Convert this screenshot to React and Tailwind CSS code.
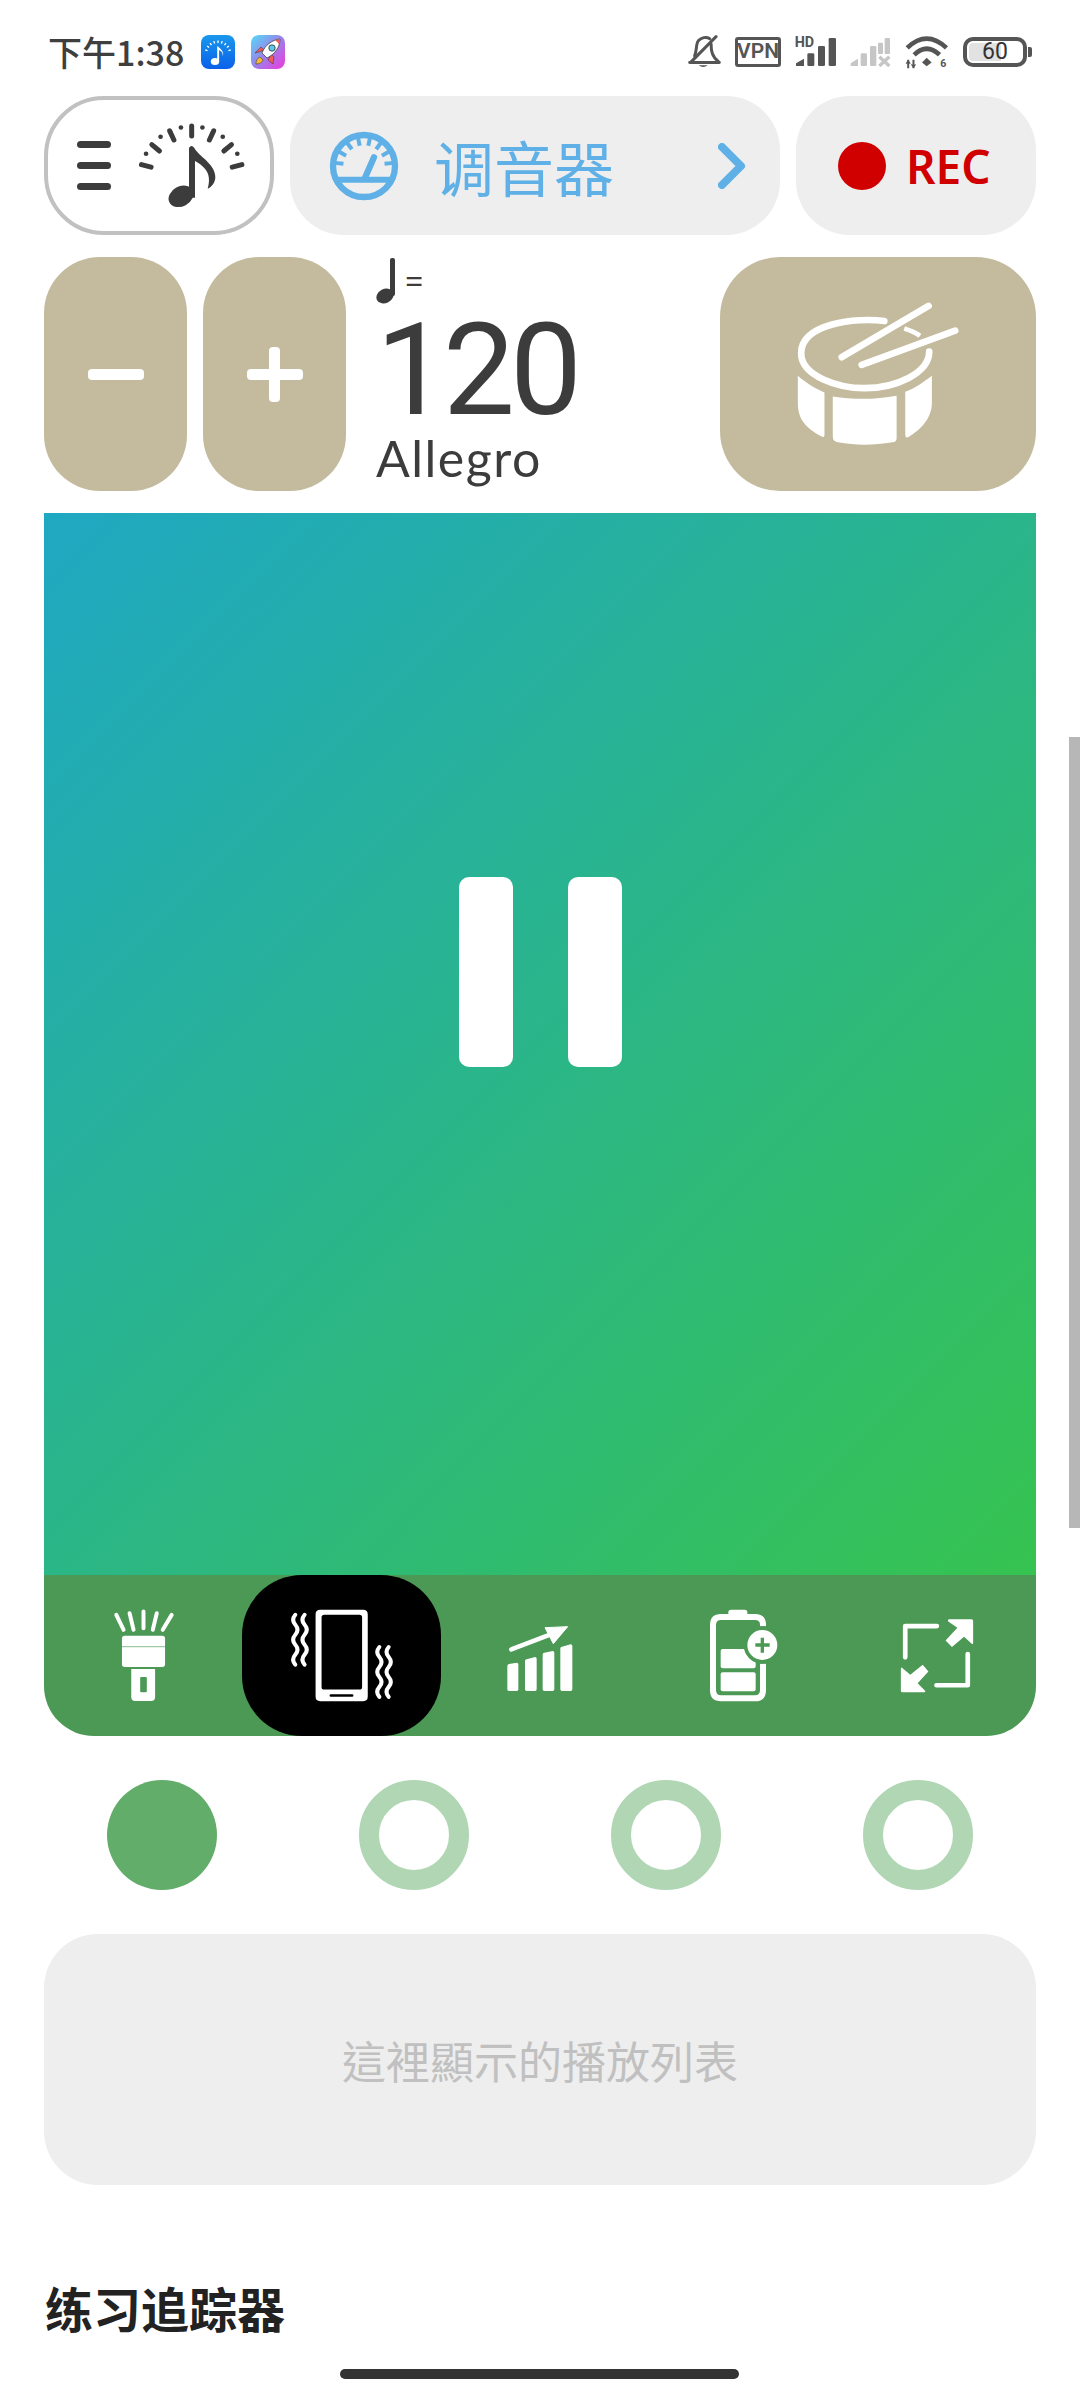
/**
 * Metronome screen: status bar, tempo controls, beat pad and playlist
 */
const DARK = '#3c3c3c';
const BLUE = '#5fb0e6';
const CJK = "font-['Noto_Sans_CJK_SC','Noto_Sans',sans-serif]";

const polar = (cx, cy, r, deg) => {
  const a = (deg * Math.PI) / 180;
  return [cx + r * Math.sin(a), cy - r * Math.cos(a)];
};

/* Status bar icons */
const AppMetronomeIcon = () => (
  <svg width="34" height="34" viewBox="0 0 34 34">
    <defs>
      <linearGradient id="appBlue" x1="0" y1="0" x2="0" y2="1">
        <stop offset="0" stopColor="#1a98ec" />
        <stop offset="1" stopColor="#0a60ea" />
      </linearGradient>
    </defs>
    <rect width="34" height="34" rx="8" fill="url(#appBlue)" />
    {[-72, -54, -36, -18, 0, 18, 36, 54, 72].map((d) => {
      const [x1, y1] = polar(17, 19, 11, d);
      const [x2, y2] = polar(17, 19, 13.5, d);
      return <line key={d} x1={x1} y1={y1} x2={x2} y2={y2} stroke="#fff" strokeWidth="1.3" />;
    })}
    <ellipse cx="14" cy="26.5" rx="4.200" ry="3.500" fill="#fff" />
    <path d="M16.2 11v15h1.900V15c2 1 4 2.600 3.600 6 1.800-3.400-1.400-6.400-3.600-8.600l-1.900-1.400z" fill="#fff" />
  </svg>
);

const AppRocketIcon = () => (
  <svg width="34" height="34" viewBox="0 0 34 34">
    <defs>
      <linearGradient id="appPink" x1="0" y1="0" x2="1" y2="1">
        <stop offset="0" stopColor="#52dcf8" />
        <stop offset="0.5" stopColor="#9a82ea" />
        <stop offset="1" stopColor="#ee38dc" />
      </linearGradient>
    </defs>
    <rect width="34" height="34" rx="8" fill="url(#appPink)" />
    <path d="M4 18l6-6 3 3-5 2zM17 25l3-6 3 3-1 7z" fill="#f05a5a" stroke="#333" strokeWidth="0.5" />
    <path d="M5 29c0-3 1-6 4-7l3 3c-1 3-4 4-7 4z" fill="#f8b830" stroke="#333" strokeWidth="0.5" />
    <path d="M11 18C14 10 21 5 29 4c0 8-5 15-13 19z" fill="#fff" stroke="#333" strokeWidth="0.7" />
    <path d="M24 4.700c2 0 4 0 5-.7 0 2-.2 3.600-.8 5.200z" fill="#f05a5a" />
    <circle cx="21" cy="13" r="3.200" fill="#5cc8e8" stroke="#333" strokeWidth="0.8" />
  </svg>
);

const BellOffIcon = () => (
  <svg width="33" height="33" viewBox="80 45 100 100" fill="none" stroke="#555" strokeWidth="9" strokeLinecap="round">
    <path d="M85 128H175M88 128L165 50" />
    <path d="M100 108C108 90 103 72 112 62C120 53 135 49 146 56" />
    <path d="M150 72C150 92 152 110 172 125" />
    <path d="M112 137H140Q126 147 112 137Z" fill="#555" stroke="none" />
  </svg>
);

const SignalHdIcon = () => (
  <svg className="overflow-visible" width="41" height="30" viewBox="405 45 123 90" fill="#555">
    <text x="404" y="76" fontSize="43" fontWeight="700" fontFamily="Roboto, sans-serif">HD</text>
    <path d="M408 124L432 110V132H408Z" />
    <rect x="442" y="94" width="21" height="38" rx="4" />
    <rect x="474" y="72" width="21" height="60" rx="4" />
    <rect x="506" y="48" width="22" height="84" rx="4" />
  </svg>
);

const SignalOffIcon = () => (
  <svg width="41" height="30" viewBox="570 45 123 90" fill="#c6c6c6">
    <path d="M572 124L594 110V132H572Z" />
    <rect x="602" y="94" width="19" height="38" rx="4" />
    <rect x="630" y="72" width="19" height="60" rx="4" />
    <rect x="654" y="62" width="15" height="34" rx="3" />
    <rect x="674" y="48" width="16" height="48" rx="3" />
    <path d="M658 104L688 132M688 104L658 132" stroke="#c6c6c6" strokeWidth="10" />
  </svg>
);

const WifiIcon = () => (
  <svg className="overflow-visible" width="44" height="33" viewBox="735 45 132 100" fill="none" stroke="#555" strokeWidth="14">
    <path d="M741 84Q800 28 860 84" />
    <path d="M762 105Q800 68 839 105" />
    <path d="M786 128L800 114L815 128L800 140Z" fill="#555" stroke="none" />
    <path d="M744 120V146M760 120V146" strokeWidth="6" />
    <path d="M738 132L744 124L750 132M754 134L760 142L766 134" strokeWidth="4" />
    <text x="841" y="143" fontSize="32" fontWeight="700" fill="#555" stroke="none" fontFamily="Roboto, sans-serif">6</text>
  </svg>
);

const Battery = () => (
  <div className="flex items-center gap-[1px]">
    <div className="relative w-[64px] h-[30px] border-[4px] border-[#555] rounded-[10px] flex items-center justify-center">
      <div className="absolute left-[2px] top-[2px] bottom-[2px] w-[32px] bg-[#e2e2e2] rounded-l-[4px]" />
      <span className="relative text-[23px] leading-none text-[#333] font-['Roboto',sans-serif]">60</span>
    </div>
    <div className="w-[4px] h-[10px] bg-[#555] rounded-r-[2px]" />
  </div>
);

const StatusBar = () => (
  <div className="h-[96px] flex items-start justify-between pl-[48px] pr-[48px] pt-[35px]">
    <div className="flex items-center">
      <span className={`text-[34px] leading-[34px] font-medium text-[#3f3f3f] w-[153px] ${CJK}`}>下午1:38</span>
      <AppMetronomeIcon />
      <div className="w-[16px]" />
      <AppRocketIcon />
    </div>
    <div className="flex items-center gap-[14px]">
      <BellOffIcon />
      <div className="w-[46px] h-[30px] border-[3px] border-[#555] rounded-[3px] flex items-center justify-center text-[21px] leading-none font-semibold text-[#555] font-['Roboto',sans-serif]">
        VPN
      </div>
      <SignalHdIcon />
      <SignalOffIcon />
      <WifiIcon />
      <Battery />
    </div>
  </div>
);

/* Top row */
const GaugeNote = () => (
  <svg width="140" height="100" viewBox="0 0 420 300">
    {[-75, -50, -25, 0, 25, 50, 75].map((d) => {
      const [x1, y1] = polar(185, 186, 126, d);
      const [x2, y2] = polar(185, 186, 156, d);
      return <line key={d} x1={x1} y1={y1} x2={x2} y2={y2} stroke={DARK} strokeWidth="15" strokeLinecap="round" />;
    })}
    {[-62, -37, -12, 12, 37, 62].map((d) => {
      const [cx, cy] = polar(185, 186, 155, d);
      return <circle key={d} cx={cx} cy={cy} r="7" fill={DARK} />;
    })}
    <ellipse cx="153" cy="241" rx="39" ry="30" transform="rotate(-28 153 241)" fill={DARK} />
    <path d="M177 95Q185 84 193 96C205 120 258 145 256 185C255 200 245 212 233 218C240 195 238 175 226 160C216 148 205 140 195 135V245H177Z" fill={DARK} />
  </svg>
);

const TunerGauge = () => (
  <svg width="70" height="70" viewBox="600 45 210 210" fill="none" stroke={BLUE}>
    <circle cx="705" cy="150" r="93" strokeWidth="19" />
    {[-84, -60, -36, -12, 12, 36, 60, 84].map((d) => {
      const [x1, y1] = polar(705, 150, 62, d);
      const [x2, y2] = polar(705, 150, 90, d);
      return <line key={d} x1={x1} y1={y1} x2={x2} y2={y2} strokeWidth="12" />;
    })}
    <line x1="615" y1="191" x2="795" y2="191" strokeWidth="18" />
    <line x1="708" y1="185" x2="735" y2="124" strokeWidth="19" strokeLinecap="round" />
  </svg>
);

const TopRow = () => (
  <div className="mx-[44px] h-[139px] flex gap-[16px]">
    <div className="w-[230px] border-[4px] border-[#c1c1c1] rounded-[60px] flex items-center pl-[29px]">
      <div className="w-[34px] flex flex-col gap-[14px] mr-[19px]">
        <div className="h-[7px] rounded-full bg-[#3c3c3c]" />
        <div className="h-[7px] rounded-full bg-[#3c3c3c]" />
        <div className="h-[7px] rounded-full bg-[#3c3c3c]" />
      </div>
      <GaugeNote />
    </div>
    <div className="w-[490px] bg-[#eeeeee] rounded-[54px] flex items-center pl-[39px] pr-[34px]">
      <TunerGauge />
      <span className={`ml-[35px] text-[60px] leading-none text-[#5fb0e6] ${CJK}`}>调音器</span>
      <svg className="ml-auto" width="28" height="46" viewBox="0 0 28 46" fill="none">
        <path d="M4 4L23 23L4 42" stroke={BLUE} strokeWidth="8" strokeLinecap="round" strokeLinejoin="round" />
      </svg>
    </div>
    <div className="w-[240px] bg-[#eeeeee] rounded-[54px] flex items-center pl-[42px]">
      <div className="w-[48px] h-[48px] rounded-full bg-[#d00000]" />
      <span className="ml-[20px] text-[46px] leading-none font-semibold text-[#d00000] font-['Noto_Sans',sans-serif]">REC</span>
    </div>
  </div>
);

/* Tempo row */
const StepButton = ({ plus }) => (
  <div className="w-[143px] bg-[#c4bb9e] rounded-[56px] flex items-center justify-center">
    <div className="relative w-[56px] h-[11px] rounded-[4px] bg-white">
      {plus && <div className="absolute left-[22px] top-[-22px] w-[11px] h-[55px] rounded-[4px] bg-white" />}
    </div>
  </div>
);

const DrumIcon = () => (
  <svg width="165" height="148" viewBox="320 180 495 445" fill="#fff">
    <g fill="none" stroke="#fff" strokeLinecap="round">
      <path d="M585 243C500 232 335 250 335 340C335 410 450 445 525 445C620 445 720 400 720 335" strokeWidth="20" />
      <path d="M645 266Q675 275 692 288" strokeWidth="14" strokeLinecap="butt" />
      <path d="M457 352L718 198M517 375L798 272" strokeWidth="20" />
    </g>
    <path d="M325 408C350 430 375 445 405 458V585Q405 595 395 590C350 565 325 540 325 490Z" />
    <path d="M430 470C490 480 560 480 622 468V595Q622 607 610 608C550 618 500 618 445 608Q430 606 430 590Z" />
    <path d="M648 456C680 445 705 425 728 408V490C728 535 695 570 658 592Q648 597 648 585Z" />
  </svg>
);

const TempoRow = () => (
  <div className="mx-[44px] mt-[22px] h-[234px] flex">
    <StepButton />
    <div className="w-[16px]" />
    <StepButton plus />
    <div className="ml-[30px] flex flex-col">
      <div className="h-[47px] flex items-center">
        <svg width="20" height="46" viewBox="0 0 20 46" fill={DARK}>
          <rect x="14" y="0" width="5" height="38" rx="2" />
          <ellipse cx="9" cy="38" rx="9" ry="7" transform="rotate(-28 9 38)" />
        </svg>
        <span className="ml-[9px] text-[32px] leading-none text-[#3c3c3c] font-['Noto_Sans',sans-serif]">=</span>
      </div>
      <div className="h-[118px] mt-[7px] text-[128px] leading-[118px] tracking-[-5px] text-[#3c3c3c] font-['Roboto',sans-serif]">
        120
      </div>
      <div className="mt-[3px] text-[50px] leading-[52px] tracking-[1.5px] text-[#3c3c3c] font-['Lato',sans-serif]">Allegro</div>
    </div>
    <div className="ml-auto w-[316px] bg-[#c4bb9e] rounded-[60px] flex items-center justify-center">
      <DrumIcon />
    </div>
  </div>
);

/* Bottom tool icons */
const FlashlightIcon = () => (
  <svg width="63" height="95" viewBox="245 145 190 285" fill="#fff">
    <path d="M258 165L280 210M298 160L310 210M340 155V205M380 160L368 210M425 165L398 210" stroke="#fff" strokeWidth="12" strokeLinecap="round" />
    <rect x="275" y="228" width="130" height="94" rx="8" />
    <line x1="275" y1="261" x2="405" y2="261" stroke="#4b9954" strokeWidth="2" />
    <path d="M303 328H375V413Q375 425 363 425H315Q303 425 303 413Z" />
    <rect x="330" y="352" width="20" height="46" rx="3" fill="#4b9954" />
  </svg>
);

const wave = (x, y) => `M${x} ${y}q-13 15 0 30q13 15 0 30q-13 15 0 30q13 15 0 30q-13 15 0 30`;

const VibrateIcon = () => (
  <svg width="108" height="95" viewBox="775 145 325 285">
    <path
      fillRule="evenodd"
      fill="#fff"
      d="M872 150H1001Q1015 150 1015 164V411Q1015 425 1001 425H872Q858 425 858 411V164Q858 150 872 150ZM884 165Q876 165 876 173V382Q876 390 884 390H990Q998 390 998 382V173Q998 165 990 165ZM904 404Q900 404 900 408Q900 412 904 412H968Q972 412 972 408Q972 404 968 404Z"
    />
    <g fill="none" stroke="#fff" strokeWidth="12" strokeLinecap="round">
      <path d={wave(797, 165)} />
      <path d={wave(825, 165)} />
      <path d={wave(1050, 262)} />
      <path d={wave(1078, 262)} />
    </g>
  </svg>
);

const ChartIcon = () => (
  <svg width="90" height="90" viewBox="0 0 270 270" fill="#fff">
    <path d="M37 165Q37 160 42 159L65 155Q70 155 70 160V235Q70 240 65 240H42Q37 240 37 235Z" />
    <path d="M90 150Q90 146 95 145L120 138Q125 138 125 143V235Q125 240 120 240H95Q90 240 90 235Z" />
    <path d="M143 130Q143 126 148 125L173 120Q178 120 178 125V235Q178 240 173 240H148Q143 240 143 235Z" />
    <path d="M196 112Q196 108 201 107L227 100Q232 100 232 105V235Q232 240 227 240H201Q196 240 196 235Z" />
    <line x1="49" y1="115" x2="165" y2="71" stroke="#fff" strokeWidth="14" strokeLinecap="round" />
    <path d="M150 50L218 47L175 98Z" stroke="#fff" strokeWidth="3" strokeLinejoin="round" />
  </svg>
);

const BatteryPlusIcon = () => (
  <svg width="74" height="95" viewBox="465 145 220 285" fill="#fff">
    <rect x="528" y="150" width="57" height="30" rx="8" />
    <path d="M632 200V195Q632 172 608 172H506Q482 172 482 196V392Q482 416 506 416H608Q632 416 632 392V312" fill="none" stroke="#fff" strokeWidth="18" />
    <rect x="505" y="268" width="105" height="58" rx="6" />
    <rect x="505" y="338" width="105" height="57" rx="6" />
    <circle cx="630" cy="256" r="56" fill="#4b9954" />
    <circle cx="630" cy="256" r="45" />
    <path d="M609 256H652M630 234V279" stroke="#4b9954" strokeWidth="10" />
  </svg>
);

const ExpandIcon = () => (
  <svg width="76" height="79" viewBox="1035 170 225 235" fill="#fff">
    <path d="M1053 293V200H1147M1239 283V376H1146" fill="none" stroke="#fff" strokeWidth="14" strokeLinecap="round" strokeLinejoin="round" />
    <path d="M1184 180H1250Q1255 180 1255 185V250Q1255 256 1250 252L1228 232L1192 262L1173 243L1208 205L1181 186Q1178 180 1184 180Z" />
    <path d="M1110 397H1045Q1040 397 1040 392V328Q1040 320 1046 326L1068 345L1105 315L1122 335L1090 370L1112 392Q1115 397 1110 397Z" />
  </svg>
);

const ToolBar = () => (
  <div className="h-[161px] grid grid-cols-5 bg-[#4b9954] rounded-b-[50px]">
    <div className="flex items-center justify-center"><FlashlightIcon /></div>
    <div className="flex items-center justify-center bg-black rounded-[60px]"><VibrateIcon /></div>
    <div className="flex items-center justify-center"><ChartIcon /></div>
    <div className="flex items-center justify-center pl-[12px]"><BatteryPlusIcon /></div>
    <div className="flex items-center justify-center"><ExpandIcon /></div>
  </div>
);

const BeatPad = () => (
  <div className="mx-[44px] mt-[22px]">
    <div className="h-[1062px] pb-[144px] flex items-center justify-center gap-[55px] bg-[linear-gradient(135deg,#1fa8c2,#36c350)]">
      <div className="w-[54px] h-[190px] bg-white rounded-[10px]" />
      <div className="w-[54px] h-[190px] bg-white rounded-[10px]" />
    </div>
    <ToolBar />
  </div>
);

const Dots = () => (
  <div className="mx-[44px] mt-[44px] px-[63px] flex justify-between">
    <div className="w-[110px] h-[110px] rounded-full bg-[#62ad6a]" />
    {[1, 2, 3].map((i) => (
      <div key={i} className="w-[110px] h-[110px] rounded-full border-[20px] border-[#b0d6b4]" />
    ))}
  </div>
);

export default function App() {
  return (
    <div className="relative w-[1080px] h-[2400px] bg-white overflow-hidden">
      <StatusBar />
      <TopRow />
      <TempoRow />
      <BeatPad />
      <Dots />

      {/* Playlist placeholder */}
      <div className="mx-[44px] mt-[44px] h-[251px] bg-[#eeeeee] rounded-[54px] flex items-center justify-center">
        <span className="text-[44px] leading-none text-[#c0c0c0] font-['Noto_Sans_CJK_TC',sans-serif]">這裡顯示的播放列表</span>
      </div>

      <h2 className={`ml-[45px] mt-[94px] text-[48px] leading-[56px] font-bold text-[#222222] ${CJK}`}>练习追踪器</h2>

      {/* Scrollbar and home indicator sit over the page */}
      <div className="absolute right-0 top-[737px] w-[11px] h-[791px] bg-[#b7b7b7]" />
      <div className="absolute left-[340px] top-[2369px] w-[399px] h-[10px] rounded-full bg-[#333333]" />
    </div>
  );
}
